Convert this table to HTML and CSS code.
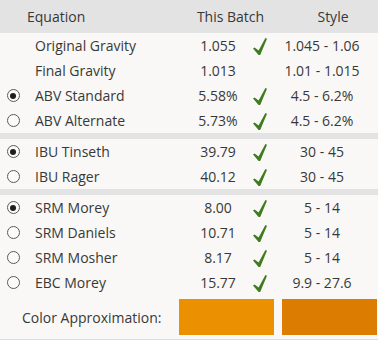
FILE: index.html
```html
<!DOCTYPE html>
<html>
<head>
<meta charset="utf-8">
<link rel="stylesheet" href="styles.css">
</head>
<body>
<div class="panel">
  <div class="row head">
    <span class="eq-h">Equation</span>
    <span class="batch-h">This Batch</span>
    <span class="style-h">Style</span>
  </div>

  <div class="row"><span class="radio-cell"></span><span class="eq">Original Gravity</span><span class="batch">1.055</span><span class="chk"><svg viewBox="0 0 14 17" width="14" height="17"><polygon points="0,10.5 1.6,9.4 5.6,12.6 12.4,0 14,0.8 7.2,17 5.6,17"/></svg></span><span class="style">1.045 - 1.06</span></div>
  <div class="row"><span class="radio-cell"></span><span class="eq">Final Gravity</span><span class="batch">1.013</span><span class="chk"></span><span class="style">1.01 - 1.015</span></div>
  <div class="row"><span class="radio-cell"><span class="radio on"></span></span><span class="eq">ABV Standard</span><span class="batch">5.58%</span><span class="chk"><svg viewBox="0 0 14 17" width="14" height="17"><polygon points="0,10.5 1.6,9.4 5.6,12.6 12.4,0 14,0.8 7.2,17 5.6,17"/></svg></span><span class="style">4.5 - 6.2%</span></div>
  <div class="row"><span class="radio-cell"><span class="radio"></span></span><span class="eq">ABV Alternate</span><span class="batch">5.73%</span><span class="chk"><svg viewBox="0 0 14 17" width="14" height="17"><polygon points="0,10.5 1.6,9.4 5.6,12.6 12.4,0 14,0.8 7.2,17 5.6,17"/></svg></span><span class="style">4.5 - 6.2%</span></div>

  <div class="sep"></div>

  <div class="row"><span class="radio-cell"><span class="radio on"></span></span><span class="eq">IBU Tinseth</span><span class="batch">39.79</span><span class="chk"><svg viewBox="0 0 14 17" width="14" height="17"><polygon points="0,10.5 1.6,9.4 5.6,12.6 12.4,0 14,0.8 7.2,17 5.6,17"/></svg></span><span class="style">30 - 45</span></div>
  <div class="row"><span class="radio-cell"><span class="radio"></span></span><span class="eq">IBU Rager</span><span class="batch">40.12</span><span class="chk"><svg viewBox="0 0 14 17" width="14" height="17"><polygon points="0,10.5 1.6,9.4 5.6,12.6 12.4,0 14,0.8 7.2,17 5.6,17"/></svg></span><span class="style">30 - 45</span></div>

  <div class="sep"></div>

  <div class="row"><span class="radio-cell"><span class="radio on"></span></span><span class="eq">SRM Morey</span><span class="batch">8.00</span><span class="chk"><svg viewBox="0 0 14 17" width="14" height="17"><polygon points="0,10.5 1.6,9.4 5.6,12.6 12.4,0 14,0.8 7.2,17 5.6,17"/></svg></span><span class="style">5 - 14</span></div>
  <div class="row"><span class="radio-cell"><span class="radio"></span></span><span class="eq">SRM Daniels</span><span class="batch">10.71</span><span class="chk"><svg viewBox="0 0 14 17" width="14" height="17"><polygon points="0,10.5 1.6,9.4 5.6,12.6 12.4,0 14,0.8 7.2,17 5.6,17"/></svg></span><span class="style">5 - 14</span></div>
  <div class="row"><span class="radio-cell"><span class="radio"></span></span><span class="eq">SRM Mosher</span><span class="batch">8.17</span><span class="chk"><svg viewBox="0 0 14 17" width="14" height="17"><polygon points="0,10.5 1.6,9.4 5.6,12.6 12.4,0 14,0.8 7.2,17 5.6,17"/></svg></span><span class="style">5 - 14</span></div>
  <div class="row"><span class="radio-cell"><span class="radio"></span></span><span class="eq">EBC Morey</span><span class="batch">15.77</span><span class="chk"><svg viewBox="0 0 14 17" width="14" height="17"><polygon points="0,10.5 1.6,9.4 5.6,12.6 12.4,0 14,0.8 7.2,17 5.6,17"/></svg></span><span class="style">9.9 - 27.6</span></div>

  <div class="color-row">
    <span class="color-label">Color Approximation:</span>
    <span class="swatch swatch-batch"></span>
    <span class="swatch swatch-style"></span>
  </div>
</div>
</body>
</html>
```

FILE: styles.css
```css
html, body {
  margin: 0;
  padding: 0;
  background: #ffffff;
}

body {
  font-family: "Open Sans", "Liberation Sans", sans-serif;
  font-size: 14px;
  color: #383838;
}

.panel {
  width: 378px;
  background: #f9f8f6;
  border-bottom: 1px solid #dcdcdc;
}

.row {
  display: grid;
  grid-template-columns: 26px 157px 70px 15px 1fr;
  height: 25px;
  align-items: center;
}

.row.head {
  height: 33px;
  background: #e3e3e3;
  grid-template-columns: 26px 157px 85px 1fr;
}

.eq-h {
  grid-column: 1 / 3;
  padding-left: 27px;
}

.batch-h {
  text-align: center;
  padding-left: 10px;
}

.style-h {
  text-align: center;
  padding-left: 20px;
}

.radio-cell {
  display: flex;
  justify-content: center;
  align-items: center;
}

.radio {
  width: 11px;
  height: 11px;
  border: 1px solid #5a5a5a;
  border-radius: 50%;
  background: #fbfbfb;
  display: flex;
  align-items: center;
  justify-content: center;
}

.radio.on::after {
  content: "";
  width: 6px;
  height: 6px;
  border-radius: 50%;
  background: #1e1e1e;
}

.eq {
  padding-left: 9px;
}

.batch {
  text-align: center;
}

.chk {
  display: flex;
  align-items: center;
}

.chk svg {
  display: block;
  fill: #3f7b1f;
  margin-top: 1px;
}

.style {
  text-align: center;
  padding-right: 2px;
}

.sep {
  height: 6px;
  background: #e3e3e3;
}

.color-row {
  display: grid;
  grid-template-columns: 171px 95px 95px;
  column-gap: 8px;
  align-items: center;
  padding: 4px 0;
}

.color-label {
  padding-left: 22px;
}

.swatch {
  height: 36px;
  display: block;
}

.swatch-batch {
  background: #eb9000;
}

.swatch-style {
  background: #dc7c00;
}
```
